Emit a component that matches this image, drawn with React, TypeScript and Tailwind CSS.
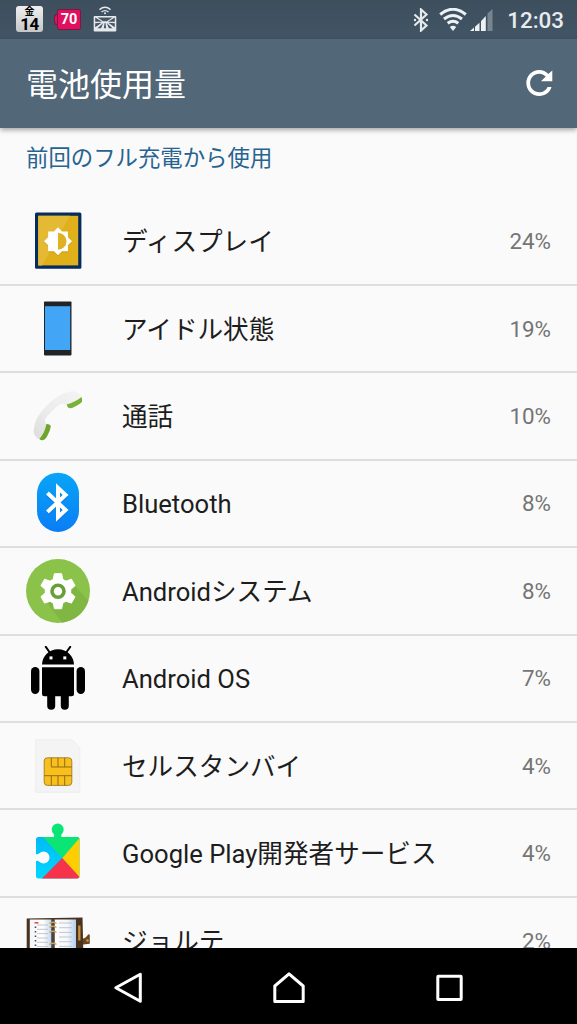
import React from 'react';

interface UsageItem {
  name: string;
  percent: number;
  icon: React.ReactNode;
}

interface IconBoxProps {
  children: React.ReactNode;
}

const IconBox: React.FC<IconBoxProps> = ({ children }: IconBoxProps) => (
  <svg viewBox="0 0 64 64" className="block h-16 w-16 shrink-0">
    {children}
  </svg>
);

const DisplayIcon = () => (
  <IconBox>
    <rect x="9" y="3.5" width="46.4" height="56.2" rx="1.5" fill="#052c60" />
    <rect x="12.2" y="6.8" width="40" height="49.6" fill="#e0b01a" />
    <path d="M12.2 6.8H44L16 56.4h-3.8z" fill="#e4ba34" />
    <path d="M32 19.5l4 4.1h5.9v5.9l4.1 4-4.1 4v5.9H36l-4 4.1-4-4.1h-5.9v-5.9l-4.1-4 4.1-4v-5.9H28z" fill="#b8860f" opacity=".35" />
    <path d="M32 18.3l4 4.1h5.9v5.9l4.1 4-4.1 4v5.9H36l-4 4.1-4-4.1h-5.9v-5.9l-4.1-4 4.1-4v-5.9H28z" fill="#fff" />
    <path d="M32 23.8a8.5 8.5 0 0 1 0 17z" fill="#e0b120" />
  </IconBox>
);

const IdleIcon = () => (
  <IconBox>
    <rect x="18" y="4.4" width="27.5" height="54" rx=".8" fill="#202427" />
    <rect x="19" y="9.2" width="25.2" height="43.8" fill="#42a5f5" />
  </IconBox>
);

const CallIcon = () => (
  <IconBox>
    <defs>
      <linearGradient id="handset" x1="0" y1="1" x2="1" y2="0">
        <stop offset="0" stopColor="#dcdcdc" />
        <stop offset=".4" stopColor="#ebebeb" />
        <stop offset="1" stopColor="#f4f4f4" />
      </linearGradient>
    </defs>
    <path d="M13.300 55.200C9.800 53.500 7.500 50.500 7.600 46.500 8.600 41.500 9.200 36 13 31 19 22 28 13.800 37 9.700c5-2.300 10-3.200 13.500-1.700 3 1.200 4.600 3 5.300 5.200l-6 6-9 1.500c-1.500.2-2-.1-2.800-.6-1.700-.7-3.900.2-5.700 1.500-5.500 4.500-9.500 8.500-13.100 13.500-.9 1.500-.5 2.500.7 3.900v5z" fill="url(#handset)" />
    <path d="M40.700 20.400C46 19 51 16.500 55.600 13q.9 2.600.4 4.700-1 1.500-5 3.900-4.500 2.700-7 2.700-2.500-.4-3.300-3.900z" fill="#7ab137" />
    <path d="M20.400 40q3.300-.2 4.400 1.900-.2 3.600-2.800 8.600-2.500 5.200-4.700 5.600-2.300.4-4-1.100C17 50.500 19.500 45.500 20.400 40z" fill="#6fa52f" />
  </IconBox>
);

const BluetoothIcon = () => (
  <IconBox>
    <defs>
      <linearGradient id="bluetooth" x1="0" y1="0" x2="0" y2="1">
        <stop offset="0" stopColor="#08a5f8" />
        <stop offset="1" stopColor="#0a7df5" />
      </linearGradient>
    </defs>
    <rect x="11" y="1.700" width="42" height="59.200" rx="21" fill="url(#bluetooth)" />
    <path d="M21.400 22L39.600 39 32 46.200V16.800l7.600 7.200-18.200 17" transform="translate(0 1.500)" fill="none" stroke="#0664c8" strokeWidth="4" opacity=".35" />
    <path d="M21.400 22L39.600 39 32 46.200V16.800l7.600 7.200-18.200 17" fill="none" stroke="#fff" strokeWidth="4" />
  </IconBox>
);

const SystemIcon = () => (
  <IconBox>
    <circle cx="32" cy="32" r="32" fill="#8bc34a" />
    <path d="M22 45l14 18.700A32 32 0 0 0 62.500 41.500L47 25z" fill="#7cb342" opacity=".75" />
    <g fill="#fff" stroke="#fff" strokeWidth="1" strokeLinejoin="round">
      <circle cx="32" cy="32.200" r="12.800" />
      <path d="M28.400 14.700h7.200l1.400 7v21l-1.400 7h-7.200l-1.400-7v-21z" />
      <path d="M28.400 14.700h7.200l1.400 7v21l-1.400 7h-7.200l-1.400-7v-21z" transform="rotate(60 32 32.200)" />
      <path d="M28.400 14.700h7.200l1.400 7v21l-1.400 7h-7.200l-1.400-7v-21z" transform="rotate(120 32 32.200)" />
    </g>
    <circle cx="32" cy="32.300" r="6" fill="#fff" stroke="#689f38" strokeWidth="3.600" />
  </IconBox>
);

const AndroidIcon = () => (
  <IconBox>
    <path d="M16 18.600C16.300 9.800 23 3.200 32 3.200s15.700 6.600 16 15.400z" />
    <path d="M19.800.9l4 5.600M44.200.9l-4 5.600" stroke="#000" strokeWidth="2" strokeLinecap="round" />
    <rect x="23.500" y="10.400" width="3" height="3" fill="#fff" />
    <rect x="37.300" y="10.400" width="3" height="3" fill="#fff" />
    <path d="M16 21.200h32v26.500a2.500 2.500 0 0 1-2.500 2.500h-27a2.500 2.500 0 0 1-2.500-2.500z" />
    <rect x="5" y="21" width="8.400" height="27" rx="4.200" />
    <rect x="50.600" y="21" width="8.400" height="27" rx="4.200" />
    <rect x="21.200" y="42" width="8" height="21.800" rx="4" />
    <rect x="34.800" y="42" width="8" height="21.800" rx="4" />
  </IconBox>
);

const SimIcon = () => (
  <IconBox>
    <path d="M9.700 5.700h36.500l7.600 8v44.600H9.700z" fill="#f4f4f4" stroke="#ebebeb" strokeWidth=".8" />
    <rect x="18.200" y="23.800" width="27.600" height="27.600" rx="3.200" fill="#f8bf1d" stroke="#a8842a" strokeWidth="1" />
    <path d="M18.200 41.700h27.600M25.300 23.800v9.200h20.500M32 23.800V33M38.700 23.800V33M25.300 41.700v9.700M32 41.700v9.700M38.700 41.700v9.700" fill="none" stroke="#8f6d16" strokeWidth="1" />
  </IconBox>
);

const PlayServicesIcon = () => (
  <IconBox>
    <defs>
      <clipPath id="puzzle">
        <path d="M12.500 16H27.800c1-1 .6-2.300-.4-3.300A6 6 0 1 1 36 12.700c-1 1-1.400 2.300-.4 3.300h15.400a2.500 2.500 0 0 1 2.500 2.500v36.400a2.500 2.500 0 0 1-2.500 2.500H12.500a2.500 2.500 0 0 1-2.500-2.500V40.200c1.200-.7 2.300-.2 3.300.6a6 6 0 1 0 0-8.500c-1 .8-2.100 1.300-3.300.6V18.500a2.500 2.500 0 0 1 2.500-2.500z" />
      </clipPath>
      <linearGradient id="playBlue" x1="0" y1="0" x2="0" y2="1">
        <stop offset="0" stopColor="#00b8f5" />
        <stop offset="1" stopColor="#00d8ff" />
      </linearGradient>
    </defs>
    <g clipPath="url(#puzzle)">
      <rect x="8" y="14" width="48" height="46" fill="url(#playBlue)" />
      <path d="M15.500 14.500V0h40v16.300L36.200 37z" fill="#0be576" />
      <path d="M54.500 16v42L36.200 37.300z" fill="#ffcd00" />
      <path d="M36.200 37l20 22H14.500z" fill="#f5334b" />
    </g>
  </IconBox>
);

const JorteIcon = () => (
  <IconBox>
    <defs>
      <linearGradient id="pageLeft" x1="0" y1="0" x2="1" y2="0">
        <stop offset="0" stopColor="#f4f6fa" />
        <stop offset=".6" stopColor="#fff" />
        <stop offset="1" stopColor="#c3d6ec" />
      </linearGradient>
      <linearGradient id="pageRight" x1="0" y1="0" x2="1" y2="0">
        <stop offset="0" stopColor="#fff" />
        <stop offset=".6" stopColor="#f2f7fd" />
        <stop offset="1" stopColor="#b5cdec" />
      </linearGradient>
    </defs>
    <path d="M.7 9.400L56.500 8.600l1.200 50H.7z" fill="#49321f" />
    <rect x="3.800" y="10.500" width="21.700" height="48" fill="url(#pageLeft)" />
    <rect x="28.500" y="10.500" width="21.500" height="48" fill="url(#pageRight)" />
    <rect x="25.500" y="10" width="3" height="48" fill="#4b4540" />
    <path d="M11 16h11M11 20.300h11M11 24.600h11M11 29h11M11 33.300h11M11 37.600h11M33 14h13M33 18.700h13M33 23.400h13M33 28h13M33 32.700h13M33 37.400h13" stroke="#b9b9bd" strokeWidth=".8" />
    <path d="M8.500 13.800h4" stroke="#e0483e" strokeWidth="1.500" />
    <path d="M9.500 17.500v1.600M9.500 22v1.600M9.500 26.500v1.600M9.500 31v1.600M9.500 35.500v1.600" stroke="#444a60" strokeWidth="1.600" />
    <path d="M23.500 14.500q3.500-2.500 7 0M23.500 18.500q3.500-2.500 7 0M23.500 23.500q3.500-2.500 7 0M23.500 35.500q3.500-2.500 7 0" fill="none" stroke="#caa45d" strokeWidth="1.300" />
    <rect x="52.200" y="16.500" width="2.300" height="15" fill="#c6923c" />
    <path d="M57 29.500c2 .3 3.500-2 5.500-4.200l1.300.5v9l-6.800.7z" fill="#6b4520" />
    <circle cx="61.500" cy="31.500" r="1.200" fill="#c99b50" />
  </IconBox>
);

const items: UsageItem[] = [
  { name: 'ディスプレイ', percent: 24, icon: <DisplayIcon /> },
  { name: 'アイドル状態', percent: 19, icon: <IdleIcon /> },
  { name: '通話', percent: 10, icon: <CallIcon /> },
  { name: 'Bluetooth', percent: 8, icon: <BluetoothIcon /> },
  { name: 'Androidシステム', percent: 8, icon: <SystemIcon /> },
  { name: 'Android OS', percent: 7, icon: <AndroidIcon /> },
  { name: 'セルスタンバイ', percent: 4, icon: <SimIcon /> },
  { name: 'Google Play開発者サービス', percent: 4, icon: <PlayServicesIcon /> },
  { name: 'ジョルテ', percent: 2, icon: <JorteIcon /> },
];

const StatusBar = () => (
  <div className="flex h-[38.500px] shrink-0 items-center justify-between bg-linear-to-b from-[#3d4f5d] to-[#425566] pr-[13px] pl-4">
    <div className="flex items-center">
      <div className="flex h-[26px] w-[27px] flex-col items-center rounded-[3px] bg-linear-to-b from-[#f0f0f0] to-[#c4c6c8] font-bold text-black">
        <span className="mt-px text-[10px] leading-[10px]">金</span>
        <span className="text-[17px] leading-[14px] tracking-[-0.5px]">14</span>
      </div>
      <div className="ml-[11px] flex items-center">
        <div className="h-[11px] w-[3px] rounded-l-sm border border-r-0 border-[#7d1745] bg-[#e0125f]" />
        <div className="flex h-[21px] w-6 items-center justify-center rounded-[2px] border border-[#7d1745] bg-[#e0105e] pt-px text-[14.500px] leading-none font-bold text-white">70</div>
      </div>
      <svg viewBox="0 0 24 26" className="ml-3 h-[26px] w-6">
        <path d="M6.500 3.600q5.500-4.600 11 0M8.500 6q3.500-2.800 7 0" fill="none" stroke="#e6eaec" strokeWidth="1.400" />
        <circle cx="12" cy="7.300" r="1" fill="#e6eaec" />
        <rect x=".7" y="10" width="22.600" height="15.500" rx="1" fill="#e6eaec" />
        <path d="M2.200 11.500L9 15.800H2.200zM21.800 11.500L15 15.800h6.800zM4.500 11.500h15l-5.500 3.700h-4zM2.200 17.300l6.500-.6-6.500 4.500zM21.800 17.300l-6.500-.6 6.500 4.500zM10.300 17L4.500 22.300h3.600zM13.700 17l5.800 5.300h-3.600zM11.600 17l-.8 5.300h2.400l-.8-5.300z" fill="#455867" />
      </svg>
    </div>
    <div className="flex items-center pt-px">
      <svg viewBox="0 0 16 24" className="h-6 w-4">
        <path d="M1.500 6.500l12 11L8 22.500v-21l5.500 5-12 11" fill="none" stroke="#e6eaec" strokeWidth="2.200" />
        <circle cx="2" cy="12" r="1.200" fill="#e6eaec" />
        <circle cx="14" cy="12" r="1.200" fill="#e6eaec" />
      </svg>
      <svg viewBox="0 0 28 24" className="ml-[10px] h-6 w-7">
        <path d="M1.200 6.500Q14-4 26.800 6.500M5 11q9-7 18 0M8.700 15.200q5.300-4 10.600 0" fill="none" stroke="#eef1f2" strokeWidth="3" />
        <path d="M10.800 19q3.200-2.500 6.400 0L14 23z" fill="#eef1f2" />
      </svg>
      <svg viewBox="0 0 23 24" className="ml-[3px] h-6 w-[23px]">
        <path d="M17.500 5.500L22.500 1v22h-5z" fill="#78858f" />
        <path d="M0 23l4-3.500V23zM5 18.700l4.500-4V23H5zM11 13.300L15.800 8v15H11z" fill="#eef1f2" />
      </svg>
      <span className="ml-[14px] text-[22.400px] leading-none font-medium text-[#e8ecee]">12:03</span>
    </div>
  </div>
);

const AppBar = () => (
  <div className="relative z-10 flex h-[89.500px] shrink-0 items-center justify-between bg-[#526777] pr-[24px] pl-[26px] shadow-[0_2px_5px_rgba(0,0,0,0.35)]">
    <h1 className="pt-[4px] text-[32px] leading-none text-white">電池使用量</h1>
    <svg viewBox="0 0 28 28" className="h-7 w-7">
      <path d="M23.300 5.100A12.800 12.800 0 0 0 14.300 1C7 1 1.300 6.900 1.300 14S7 27 14.300 27c5.900 0 10.700-3.700 12.200-9H22.600c-1.400 3.100-4.500 5.300-8.300 5.300-5.200 0-9.200-4.100-9.200-9.300s4-9.300 9.200-9.300c2.600 0 4.700 1.100 6.400 2.800L16 12.300h11.300V1.400z" fill="#fff" />
    </svg>
  </div>
);

const NavBar = () => (
  <div className="flex h-[76.500px] shrink-0 items-center justify-center bg-black pt-[5px]">
    <div className="flex items-center gap-32">
      <svg viewBox="0 0 32 32" className="h-8 w-8">
        <path d="M27.300 2.300v27L2.800 15.800z" fill="none" stroke="#fff" strokeWidth="3" strokeLinejoin="round" />
      </svg>
      <svg viewBox="0 0 32 32" className="h-8 w-8">
        <path d="M1.800 29.500V14L16 1.800 30.200 14v15.500z" fill="none" stroke="#fff" strokeWidth="3" strokeLinejoin="round" />
      </svg>
      <svg viewBox="0 0 32 32" className="h-8 w-8">
        <rect x="4.800" y="4.200" width="23.400" height="23.400" rx=".5" fill="none" stroke="#fff" strokeWidth="3" strokeLinejoin="round" />
      </svg>
    </div>
  </div>
);

const UsageRow: React.FC<{ item: UsageItem }> = ({ item }) => (
  <li className="flex h-[87.440px] shrink-0 items-center border-b-2 border-[#dedede] px-[26px]">
    {item.icon}
    <span className="ml-8 flex-1 pt-[2px] text-[25.600px] leading-8 whitespace-nowrap text-[#1d1d1d]">{item.name}</span>
    <span className="text-[22.400px] leading-8 text-[#757575]">{item.percent}%</span>
  </li>
);

const App: React.FC = () => {
  return (
    <div className="flex h-[1024px] w-[577px] flex-col overflow-hidden bg-[#fafafa] font-[Roboto,'Noto_Sans_CJK_JP',sans-serif]">
      <StatusBar />
      <AppBar />
      <main className="min-h-0 flex-1 overflow-hidden">
        <h2 className="flex h-[70.400px] items-start px-[26px] pt-[14px] text-[22.400px] leading-8 text-[#266391]">前回のフル充電から使用</h2>
        <ul className="flex flex-col">
          {items.map((item) => (
            <UsageRow key={item.name} item={item} />
          ))}
        </ul>
      </main>
      <NavBar />
    </div>
  );
};

export default App;
